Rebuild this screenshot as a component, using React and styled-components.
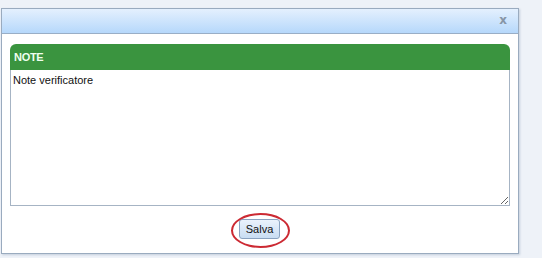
import styled, { createGlobalStyle } from "styled-components";

const GlobalStyle = createGlobalStyle`
	html, body {
		margin: 0;
		padding: 0;
		background: #eef2f8;
		font-family: Tahoma, "Liberation Sans", "DejaVu Sans", sans-serif;
	}
`;

const Page = styled.div`
	width: 542px;
	height: 258px;
	padding: 8px 0 0 1px;
	box-sizing: border-box;
`;

const Dialog = styled.div`
	width: 518px;
	height: 246px;
	box-sizing: border-box;
	border: 1px solid #9aabbf;
	background: #ffffff;
	box-shadow: 1px 1px 2px rgba(120, 140, 170, 0.35);
	display: flex;
	flex-direction: column;
`;

const TitleBar = styled.div`
	height: 24px;
	border-bottom: 1px solid #99aec6;
	background: linear-gradient(180deg, #e4f0fe 0%, #b6d8fb 100%);
	display: flex;
	align-items: center;
	justify-content: flex-end;
	padding-right: 11px;
`;

const Close = styled.span`
	font-size: 12px;
	font-weight: bold;
	font-family: "DejaVu Sans", sans-serif;
	color: #8795a6;
	line-height: 1;
	margin-top: -2px;
`;

const Body = styled.div`
	flex: 1;
	padding: 10px 8px 0 8px;
	display: flex;
	flex-direction: column;
	align-items: stretch;
`;

const Header = styled.div`
	height: 26px;
	background: #3a943f;
	border-radius: 6px 6px 0 0;
	color: #f0fff0;
	font-size: 11px;
	font-weight: bold;
	font-family: "Liberation Sans", sans-serif;
	display: flex;
	align-items: center;
	padding-left: 4px;
	letter-spacing: -0.3px;
`;

const Notes = styled.textarea`
	height: 136px;
	box-sizing: border-box;
	border: 1px solid #a6b4c4;
	border-top: none;
	margin: 0;
	padding: 4px 2px;
	resize: vertical;
	font-family: "Liberation Sans", sans-serif;
	font-size: 11px;
	color: #111;
	outline: none;
`;

const Actions = styled.div`
	display: flex;
	justify-content: center;
	padding-top: 13px;
	padding-right: 1px;
`;

const Highlight = styled.div`
	position: relative;
	display: inline-flex;
`;

const Ring = styled.div`
	position: absolute;
	left: -8px;
	top: -6px;
	width: 59px;
	height: 35px;
	box-sizing: border-box;
	border: 2px solid #cc2a33;
	border-radius: 50%;
	pointer-events: none;
`;

const Button = styled.button`
	width: 41px;
	height: 20px;
	box-sizing: border-box;
	border: 1px solid #8aa2c0;
	border-radius: 3px;
	background: linear-gradient(180deg, #eaf2fc 0%, #c9ddf3 100%);
	font-family: "Liberation Sans", sans-serif;
	font-size: 11px;
	color: #111;
	padding: 0;
	cursor: pointer;
`;

export default function App() {
	return (
		<>
			<GlobalStyle />
			<Page>
				<Dialog>
					<TitleBar>
						<Close>x</Close>
					</TitleBar>
					<Body>
						<Header>NOTE</Header>
						<Notes defaultValue="Note verificatore" />
						<Actions>
							<Highlight>
								<Button type="button">Salva</Button>
								<Ring />
							</Highlight>
						</Actions>
					</Body>
				</Dialog>
			</Page>
		</>
	);
}
